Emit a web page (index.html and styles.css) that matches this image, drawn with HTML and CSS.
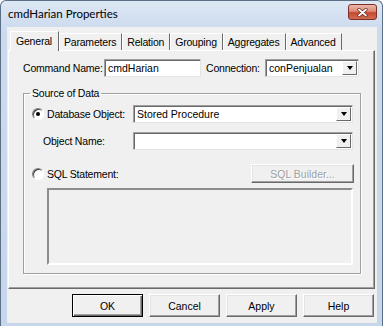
FILE: index.html
```html
<!DOCTYPE html>
<html lang="en">

<head>
  <meta charset="UTF-8" />
  <title>cmdHarian Properties</title>
  <link rel="stylesheet" href="styles.css">
</head>

<body>

  <div class="window">
    <!-- title bar -->
    <div class="titlebar">
      <span class="title">cmdHarian Properties</span>
      <button class="close" aria-label="Close">
        <svg width="11" height="9" viewBox="0 0 11 9">
          <path d="M2 1.5 L9 7.5 M9 1.5 L2 7.5" stroke="#6a2418" stroke-width="3.2" stroke-linecap="round" />
          <path d="M2 1.5 L9 7.5 M9 1.5 L2 7.5" stroke="#fff" stroke-width="1.8" stroke-linecap="round" />
        </svg>
      </button>
    </div>

    <div class="client">
      <ul class="tabs">
        <li class="tab active">General</li>
        <li class="tab">Parameters</li>
        <li class="tab">Relation</li>
        <li class="tab">Grouping</li>
        <li class="tab">Aggregates</li>
        <li class="tab">Advanced</li>
      </ul>

      <div class="panel">
        <div class="row">
          <label class="lbl name-lbl">Command Name:</label>
          <div class="field name-field">cmdHarian</div>
          <label class="lbl conn-lbl">Connection:</label>
          <div class="field combo conn-combo"><span>conPenjualan</span><span class="drop"></span></div>
        </div>

        <fieldset class="group">
          <legend>Source of Data</legend>

          <div class="row">
            <label class="opt"><span class="radio checked"></span>Database Object:</label>
            <div class="field combo wide"><span>Stored Procedure</span><span class="drop"></span></div>
          </div>

          <div class="row obj-row">
            <label class="opt sub">Object Name:</label>
            <div class="field combo wide"><span></span><span class="drop"></span></div>
          </div>

          <div class="row sql-row">
            <label class="opt"><span class="radio"></span>SQL Statement:</label>
            <button class="btn builder" disabled>SQL Builder...</button>
          </div>

          <div class="sql-box"></div>
        </fieldset>
      </div>

      <div class="buttons">
        <button class="btn default">OK</button>
        <button class="btn">Cancel</button>
        <button class="btn">Apply</button>
        <button class="btn">Help</button>
      </div>
    </div>
  </div>

</body>

</html>
```

FILE: styles.css
```css
* {
  box-sizing: border-box;
}
body {
  margin: 0;
  font-family: "Liberation Sans", Arial, sans-serif;
  font-size: 10.5px;
  color: #000;
  background: #fff;
}
.window {
  width: 383px;
  height: 326px;
  display: flex;
  flex-direction: column;
  padding: 0 5px 3px 6px;
  background: linear-gradient(#dde8f5, #cbdaed 30px, #c7d7eb);
  border: 1px solid #5d6f86;
  border-bottom: none;
  border-radius: 6px 6px 0 0;
}
.titlebar {
  height: 26px;
  display: flex;
  justify-content: space-between;
  align-items: flex-start;
}
.title {
  margin: 5px 0 0 1px;
  font-family: Lato, sans-serif;
  font-size: 11.5px;
  line-height: 16px;
}
.close {
  width: 29px;
  height: 16px;
  margin-top: 3px;
  padding: 0;
  display: flex;
  align-items: center;
  justify-content: center;
  border: 1px solid #7a3024;
  border-radius: 3px;
  background: linear-gradient(#ecb9ac, #dc8a76 45%, #c7482f 55%, #d26b52);
}
.client {
  flex: 1;
  display: flex;
  flex-direction: column;
  padding: 4px 2px 0 1px;
  background: #f0f0f0;
}

/* tabs */
.tabs {
  display: flex;
  align-items: flex-end;
  height: 19px;
  margin: 0;
  padding: 0 0 0 2px;
  list-style: none;
}
.tab {
  height: 17px;
  padding: 0 5px 0 4px;
  line-height: 16px;
  letter-spacing: -0.2px;
  border: 1px solid;
  border-color: #fff #696969 transparent #fff;
  border-bottom: none;
}
.tab.active {
  position: relative;
  z-index: 1;
  height: 20px;
  margin-bottom: -1px;
  padding: 0 6px 0 5px;
  line-height: 19px;
  background: #f0f0f0;
}

/* panel */
.panel {
  height: 239px;
  padding: 8px 13px 0 14px;
  border: 1px solid;
  border-color: #fff #696969 #696969 #fff;
  box-shadow: inset -1px -1px 0 #a0a0a0;
}
.row {
  display: flex;
  align-items: center;
  height: 18px;
}
.lbl {
  letter-spacing: -0.2px;
}
.name-lbl {
  width: 81px;
}
.conn-lbl {
  width: 59px;
  margin-left: 5px;
}
.field {
  height: 18px;
  padding-left: 3px;
  line-height: 16px;
  background: #fff;
  border: 1px solid;
  border-color: #a0a0a0 #e3e3e3 #e3e3e3 #a0a0a0;
  box-shadow: inset 1px 1px 0 #696969;
}
.name-field {
  width: 97px;
}
.combo {
  display: flex;
  justify-content: space-between;
  align-items: center;
  padding-right: 1px;
}
.conn-combo {
  width: 94px;
}
.drop {
  width: 15px;
  height: 14px;
  display: flex;
  align-items: center;
  justify-content: center;
  background: #f0f0f0;
  border: 1px solid;
  border-color: #fff #696969 #696969 #fff;
}
.drop::after {
  content: "";
  border-top: 4px solid #000;
  border-left: 3.5px solid transparent;
  border-right: 3.5px solid transparent;
}

/* source of data group */
.group {
  margin: 10px 0 0;
  padding: 5px 6px 8px 8px;
  min-width: 0;
  border: 1px solid #a0a0a0;
  box-shadow: inset 1px 1px 0 #fff, 1px 1px 0 #fff;
}
.group legend {
  margin-left: -2px;
  padding: 0 2px;
  line-height: 13px;
  letter-spacing: -0.2px;
}
.opt {
  display: flex;
  align-items: center;
  width: 101px;
  letter-spacing: -0.2px;
}
.opt.sub {
  padding-left: 11px;
}
.radio {
  position: relative;
  width: 12px;
  height: 12px;
  margin-right: 3px;
  border-radius: 50%;
  background: #fff;
  border: 1px solid;
  border-color: #808080 #fff #fff #808080;
  box-shadow: inset 1px 1px 0 #404040;
}
.radio.checked::after {
  content: "";
  position: absolute;
  left: 3px;
  top: 3px;
  width: 4px;
  height: 4px;
  border-radius: 50%;
  background: #000;
}
.wide {
  width: 220px;
}
.obj-row {
  margin-top: 9px;
}
.sql-row {
  height: 19px;
  margin-top: 14px;
  justify-content: space-between;
}
.sql-box {
  width: 306px;
  height: 77px;
  margin: 5px 0 0 15px;
  border: 2px solid;
  border-color: #8c8c8c #fff #fff #8c8c8c;
  background: #f0f0f0;
}

/* buttons */
.btn {
  height: 23px;
  padding: 0;
  font-family: inherit;
  font-size: 10.5px;
  color: #000;
  background: #f0f0f0;
  border: 1px solid;
  border-color: #fff #696969 #696969 #fff;
  box-shadow: inset -1px -1px 0 #a0a0a0, inset 1px 1px 0 #e3e3e3;
}
.builder {
  width: 103px;
  height: 19px;
  color: #a0a0a0;
  text-shadow: 1px 1px 0 #fff;
}
.buttons {
  display: flex;
  justify-content: flex-end;
  gap: 6px;
  margin-top: 5px;
  padding-right: 1px;
}
.buttons .btn {
  width: 71px;
}
.btn.default {
  border-color: #000;
  box-shadow: inset 1px 1px 0 #fff, inset -1px -1px 0 #696969, inset -2px -2px 0 #a0a0a0;
}
```
